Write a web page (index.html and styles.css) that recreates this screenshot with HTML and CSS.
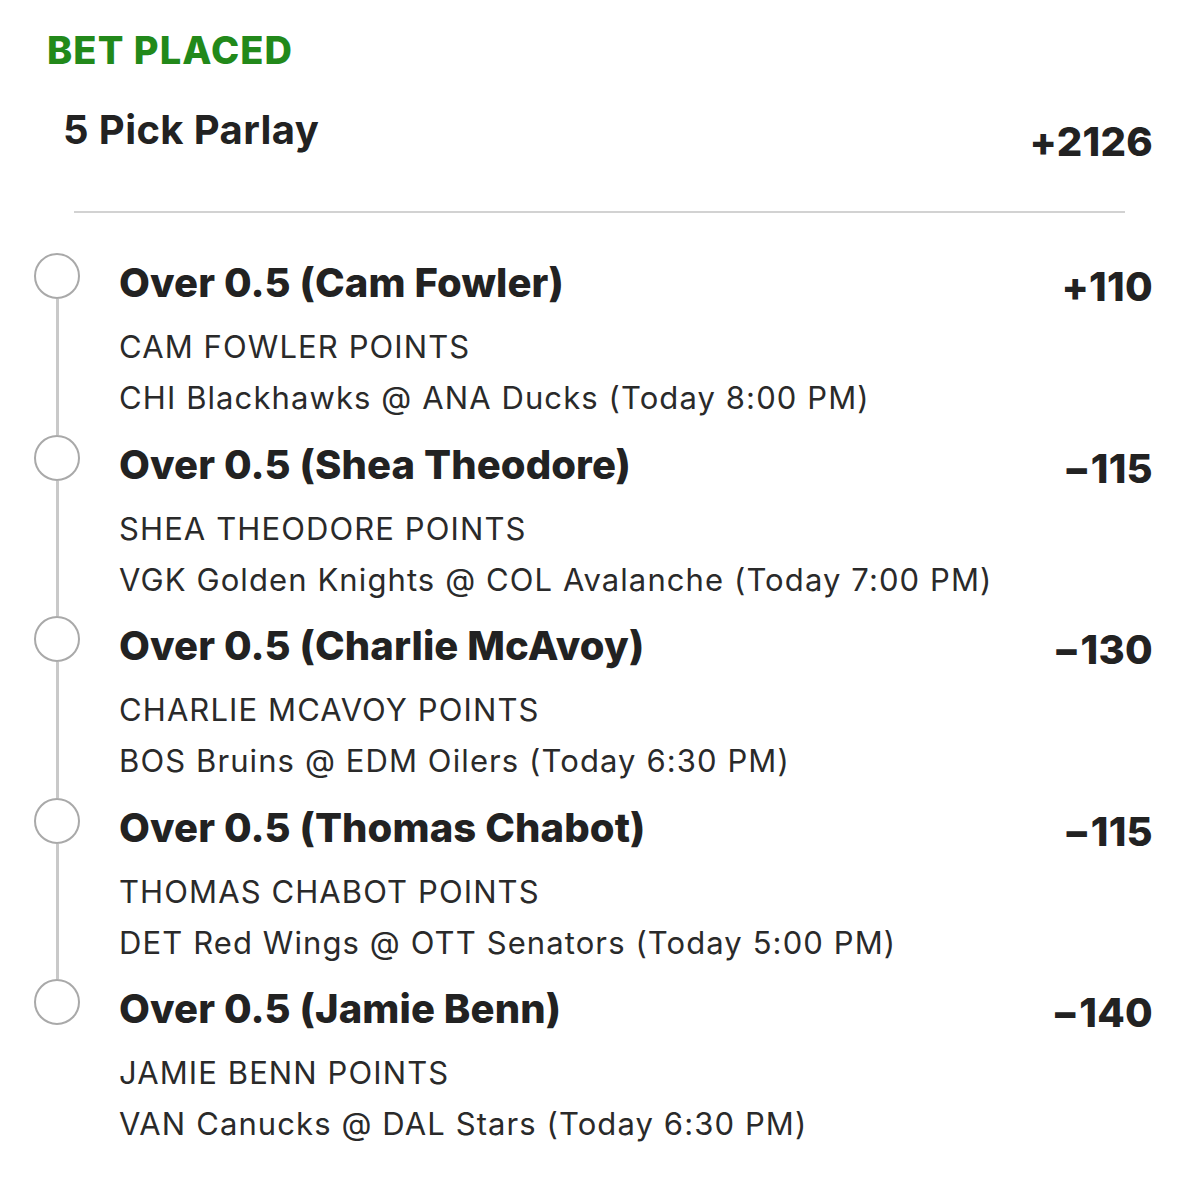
FILE: index.html
```html
<!DOCTYPE html>
<html lang="en">
<head>
<meta charset="utf-8">
<title>Bet Placed</title>
<link rel="stylesheet" href="styles.css">
</head>
<body>
<main class="slip">
  <h1 class="status">BET PLACED</h1>
  <div class="summary">
    <h2 class="summary-title">5 Pick Parlay</h2>
    <span class="summary-odds">+2126</span>
  </div>
  <hr class="divider">
  <ol class="legs">
    <li class="leg">
      <div class="marker"><span class="dot"></span><span class="line"></span></div>
      <div class="leg-title">Over 0.5 (Cam Fowler)</div>
      <div class="leg-odds">+110</div>
      <div class="leg-market">CAM FOWLER POINTS</div>
      <div class="leg-game">CHI Blackhawks @ ANA Ducks (Today 8:00 PM)</div>
    </li>
    <li class="leg">
      <div class="marker"><span class="dot"></span><span class="line"></span></div>
      <div class="leg-title">Over 0.5 (Shea Theodore)</div>
      <div class="leg-odds">−115</div>
      <div class="leg-market">SHEA THEODORE POINTS</div>
      <div class="leg-game">VGK Golden Knights @ COL Avalanche (Today 7:00 PM)</div>
    </li>
    <li class="leg">
      <div class="marker"><span class="dot"></span><span class="line"></span></div>
      <div class="leg-title">Over 0.5 (Charlie McAvoy)</div>
      <div class="leg-odds">−130</div>
      <div class="leg-market">CHARLIE MCAVOY POINTS</div>
      <div class="leg-game">BOS Bruins @ EDM Oilers (Today 6:30 PM)</div>
    </li>
    <li class="leg">
      <div class="marker"><span class="dot"></span><span class="line"></span></div>
      <div class="leg-title">Over 0.5 (Thomas Chabot)</div>
      <div class="leg-odds">−115</div>
      <div class="leg-market">THOMAS CHABOT POINTS</div>
      <div class="leg-game">DET Red Wings @ OTT Senators (Today 5:00 PM)</div>
    </li>
    <li class="leg">
      <div class="marker"><span class="dot"></span><span class="line"></span></div>
      <div class="leg-title">Over 0.5 (Jamie Benn)</div>
      <div class="leg-odds">−140</div>
      <div class="leg-market">JAMIE BENN POINTS</div>
      <div class="leg-game">VAN Canucks @ DAL Stars (Today 6:30 PM)</div>
    </li>
  </ol>
</main>
</body>
</html>
```

FILE: styles.css
```css
* { box-sizing: border-box; }

html, body {
  margin: 0;
  padding: 0;
  background: #ffffff;
}

body {
  font-family: Inter, "Noto Sans", "Liberation Sans", sans-serif;
  color: #222222;
}

.slip {
  width: 1200px;
  padding: 26px 47px 0 34px;
}

.status {
  margin: 0 0 0 13px;
  font-size: 38px;
  line-height: 48px;
  font-weight: 800;
  color: #22891a;
  letter-spacing: 1.1px;
}

.summary {
  display: flex;
  justify-content: space-between;
  align-items: flex-start;
  margin-top: 32px;
  padding-left: 29px;
}

.summary-title {
  margin: 0;
  font-size: 40px;
  line-height: 48px;
  font-weight: 700;
  letter-spacing: 0.4px;
}

.summary-odds {
  margin-top: 12px;
  font-size: 40px;
  line-height: 48px;
  font-weight: 800;
  letter-spacing: 0.3px;
}

.divider {
  margin: 45px 28px 0 40px;
  border: 0;
  height: 2px;
  background: #d2d2d2;
}

.legs {
  list-style: none;
  margin: 40px 0 0;
  padding: 0;
}

.leg {
  display: grid;
  grid-template-columns: 46px 1fr auto;
  column-gap: 39px;
}

.marker {
  grid-row: 1 / span 3;
  display: flex;
  flex-direction: column;
  align-items: center;
}

.dot {
  width: 46px;
  height: 46px;
  flex: none;
  border: 2.5px solid #a9a9a9;
  border-radius: 50%;
}

.line {
  flex: 1;
  width: 3px;
  background: #c9c9c9;
}

.leg:last-child .line { display: none; }

.leg-title {
  font-size: 40px;
  line-height: 60px;
  font-weight: 800;
  color: #222222;
  letter-spacing: 0.1px;
}

.leg-odds {
  align-self: end;
  font-size: 40px;
  line-height: 52px;
  font-weight: 800;
  text-align: right;
  color: #222222;
  letter-spacing: 0.3px;
}

.leg-market {
  grid-column: 2 / span 2;
  margin-top: 14px;
  font-size: 31px;
  line-height: 40px;
  font-weight: 400;
  color: #2a2a2a;
  letter-spacing: 1.1px;
}

.leg-game {
  grid-column: 2 / span 2;
  margin-top: 11px;
  padding-bottom: 16.5px;
  font-size: 31px;
  line-height: 40px;
  font-weight: 400;
  color: #2a2a2a;
  letter-spacing: 1.1px;
}
```
